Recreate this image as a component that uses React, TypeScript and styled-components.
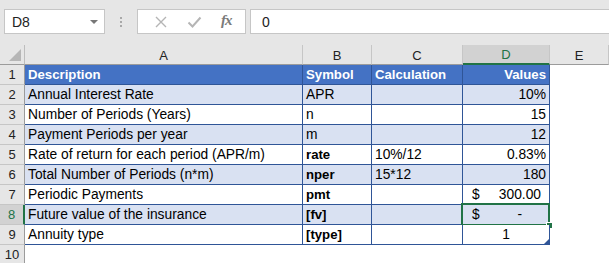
import React from "react";
import styled, { createGlobalStyle, css } from "styled-components";

const GlobalStyle = createGlobalStyle`
  html, body {
    margin: 0;
    padding: 0;
    background: #ffffff;
  }
  body {
    font-family: "Liberation Sans", Arial, sans-serif;
    color: #000;
  }
`;

const BLUE = "#4472c4";
const BAND = "#d9e1f2";
const LINE = "#2f5597";
const GREEN = "#217346";

const Page = styled.div`
  width: 609px;
  height: 263px;
  overflow: hidden;
  background: #fff;
`;

const Toolbar = styled.div`
  height: 45px;
  box-sizing: border-box;
  background: #e6e6e6;
  display: flex;
  align-items: flex-start;
  padding: 9px 0 0 4px;
`;

const NameBox = styled.div`
  width: 101px;
  height: 25px;
  box-sizing: border-box;
  background: #fff;
  border: 1px solid #c6c6c6;
  display: flex;
  align-items: center;
  justify-content: space-between;
  padding: 0 6px 0 7px;
  font-size: 14px;
  color: #222;
`;

const Caret = styled.span`
  width: 0;
  height: 0;
  border-left: 4px solid transparent;
  border-right: 4px solid transparent;
  border-top: 4px solid #777;
`;

const Grip = styled.div`
  width: 32px;
  height: 25px;
  display: flex;
  flex-direction: column;
  align-items: center;
  justify-content: center;
  gap: 2px;
`;

const GripDot = styled.span`
  width: 2px;
  height: 2px;
  background: #a8a8a8;
`;

const FxButtons = styled.div`
  width: 109px;
  height: 25px;
  box-sizing: border-box;
  background: #fff;
  border: 1px solid #c6c6c6;
  display: flex;
  align-items: center;
  justify-content: space-around;
  padding: 0 4px 0 6px;
`;

const FxLabel = styled.span`
  font-family: "Liberation Serif", "Times New Roman", serif;
  font-style: italic;
  font-size: 15px;
  font-weight: 700;
  color: #7a7a7a;
  letter-spacing: -1px;
  margin-top: -2px;
`;

const FormulaInput = styled.div`
  flex: 1;
  height: 25px;
  margin-left: 4px;
  box-sizing: border-box;
  background: #fff;
  border: 1px solid #c6c6c6;
  border-right: none;
  display: flex;
  align-items: center;
  padding-left: 11px;
  font-size: 14px;
  color: #222;
`;

const Grid = styled.div`
  display: grid;
  grid-template-columns: 25px 278px 69px 91px 87px 1fr;
  grid-auto-rows: 20px;
`;

const Corner = styled.div`
  background: #e6e6e6;
  border-right: 1px solid #bdbdbd;
  border-bottom: 1px solid #9b9b9b;
  box-sizing: border-box;
  position: relative;
  &::after {
    content: "";
    position: absolute;
    right: 3px;
    bottom: 3px;
    width: 0;
    height: 0;
    border-left: 12px solid transparent;
    border-bottom: 12px solid #b6b6b6;
  }
`;

const ColHeader = styled.div<{ $active?: boolean }>`
  box-sizing: border-box;
  background: ${(p) => (p.$active ? "#d2d2d2" : "#e6e6e6")};
  border-right: 1px solid #c6c6c6;
  border-bottom: ${(p) => (p.$active ? `2px solid ${GREEN}` : "1px solid #9b9b9b")};
  display: flex;
  align-items: center;
  justify-content: center;
  font-size: 13px;
  padding-top: 1px;
  color: ${(p) => (p.$active ? GREEN : "#222")};
`;

const RowHeader = styled.div<{ $active?: boolean }>`
  box-sizing: border-box;
  background: ${(p) => (p.$active ? "#d2d2d2" : "#e6e6e6")};
  border-right: ${(p) => (p.$active ? `2px solid ${GREEN}` : "1px solid #9b9b9b")};
  border-bottom: 1px solid #c6c6c6;
  display: flex;
  align-items: flex-end;
  justify-content: center;
  padding-bottom: 2px;
  font-size: 13px;
  color: ${(p) => (p.$active ? GREEN : "#222")};
`;

const Cell = styled.div<{
  $band?: boolean;
  $head?: boolean;
  $bold?: boolean;
  $align?: "left" | "right" | "center";
}>`
  position: relative;
  box-sizing: border-box;
  border-right: 1px solid ${LINE};
  border-bottom: 1px solid ${LINE};
  background: ${(p) => (p.$head ? BLUE : p.$band ? BAND : "#fff")};
  color: ${(p) => (p.$head ? "#fff" : "#000")};
  font-size: ${(p) => (p.$head || p.$bold ? "13.2px" : "13.8px")};
  font-weight: ${(p) => (p.$head || p.$bold ? 700 : 400)};
  display: flex;
  align-items: flex-end;
  padding: 0 3px 1px 3px;
  line-height: 17px;
  white-space: nowrap;
  ${(p) =>
    p.$align === "right" &&
    css`
      justify-content: flex-end;
    `}
  ${(p) =>
    p.$align === "center" &&
    css`
      justify-content: center;
    `}
`;

const Accounting = styled.div<{ $dash?: boolean }>`
  flex: 1;
  display: flex;
  justify-content: space-between;
  padding: 0 ${(p) => (p.$dash ? "24px" : "5px")} 0 6px;
`;

const Blank = styled.div`
  background: #fff;
`;

const Selection = styled.div`
  position: absolute;
  left: -2px;
  top: -2px;
  right: -1px;
  bottom: -2px;
  border: 2px solid ${GREEN};
  pointer-events: none;
  &::after {
    content: "";
    position: absolute;
    right: -5px;
    bottom: -5px;
    width: 5px;
    height: 5px;
    background: ${GREEN};
    border: 1px solid #fff;
  }
`;

const ResizeMark = styled.span`
  position: absolute;
  right: 0;
  bottom: 0;
  width: 0;
  height: 0;
  border-left: 5px solid transparent;
  border-bottom: 5px solid ${LINE};
`;

const XIcon = () => (
  <svg width="14" height="14" viewBox="0 0 14 14">
    <path d="M2 2 L12 12 M12 2 L2 12" stroke="#b5b5b5" strokeWidth="1.4" fill="none" />
  </svg>
);

const CheckIcon = () => (
  <svg width="15" height="14" viewBox="0 0 15 14">
    <path d="M1.5 7.5 L5.5 11.5 L13.5 2.5" stroke="#b5b5b5" strokeWidth="2" fill="none" />
  </svg>
);

type Row = {
  a: string;
  b: string;
  c: string;
  d: React.ReactNode;
  bold?: boolean;
  dAlign?: "left" | "right" | "center";
};

const rows: Row[] = [
  { a: "Annual Interest Rate", b: "APR", c: "", d: "10%" },
  { a: "Number of Periods (Years)", b: "n", c: "", d: "15" },
  { a: "Payment Periods per year", b: "m", c: "", d: "12" },
  { a: "Rate of return for each period (APR/m)", b: "rate", c: "10%/12", d: "0.83%", bold: true },
  { a: "Total Number of Periods (n*m)", b: "nper", c: "15*12", d: "180", bold: true },
  {
    a: "Periodic Payments",
    b: "pmt",
    c: "",
    d: (
      <Accounting>
        <span>$</span>
        <span>300.00</span>
      </Accounting>
    ),
    bold: true,
  },
  {
    a: "Future value of the insurance",
    b: "[fv]",
    c: "",
    d: (
      <Accounting $dash>
        <span>$</span>
        <span>-</span>
      </Accounting>
    ),
    bold: true,
  },
  { a: "Annuity type", b: "[type]", c: "", d: "1", bold: true, dAlign: "center" },
];

export default function App() {
  return (
    <Page>
      <GlobalStyle />
      <Toolbar>
        <NameBox>
          <span>D8</span>
          <Caret />
        </NameBox>
        <Grip>
          <GripDot />
          <GripDot />
          <GripDot />
        </Grip>
        <FxButtons>
          <XIcon />
          <CheckIcon />
          <FxLabel>fx</FxLabel>
        </FxButtons>
        <FormulaInput>0</FormulaInput>
      </Toolbar>

      <Grid>
        <Corner />
        <ColHeader>A</ColHeader>
        <ColHeader>B</ColHeader>
        <ColHeader>C</ColHeader>
        <ColHeader $active>D</ColHeader>
        <ColHeader>E</ColHeader>

        <RowHeader>1</RowHeader>
        <Cell $head>Description</Cell>
        <Cell $head>Symbol</Cell>
        <Cell $head>Calculation</Cell>
        <Cell $head $align="right">
          Values
        </Cell>
        <Blank />

        {rows.map((r, i) => {
          const n = i + 2;
          const band = n % 2 === 0;
          const isText = typeof r.d === "string";
          return (
            <React.Fragment key={n}>
              <RowHeader $active={n === 8}>{n}</RowHeader>
              <Cell $band={band}>{r.a}</Cell>
              <Cell $band={band} $bold={r.bold}>
                {r.b}
              </Cell>
              <Cell $band={band}>{r.c}</Cell>
              <Cell $band={band} $align={isText ? r.dAlign || "right" : "left"}>
                {r.d}
                {n === 8 && <Selection />}
                {n === 9 && <ResizeMark />}
              </Cell>
              <Blank />
            </React.Fragment>
          );
        })}

        <RowHeader>10</RowHeader>
        <Blank />
        <Blank />
        <Blank />
        <Blank />
        <Blank />
      </Grid>
    </Page>
  );
}
